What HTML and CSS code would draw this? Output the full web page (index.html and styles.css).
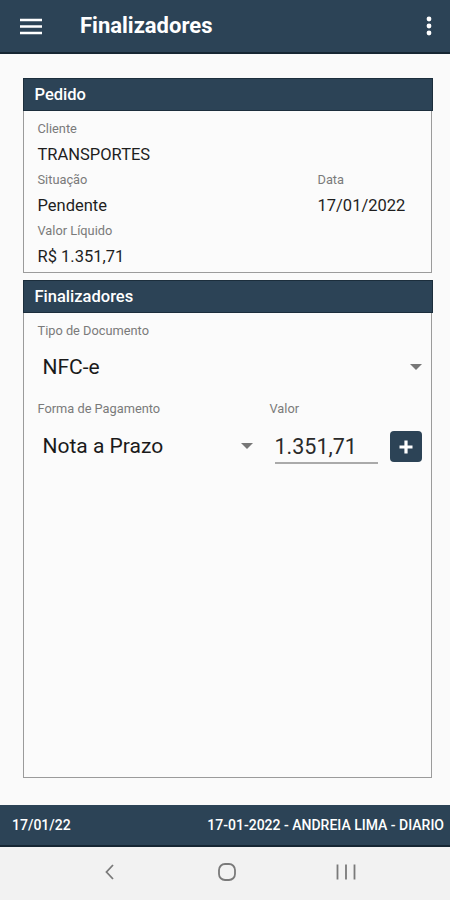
FILE: index.html
```html
<!DOCTYPE html>
<html lang="pt-BR">

<head>
    <meta charset="UTF-8" />
    <meta name="viewport" content="width=device-width, initial-scale=1.0" />
    <title>Finalizadores</title>
    <link rel="stylesheet" href="styles.css">
</head>

<body>
    <header class="appbar">
        <svg class="menu-icon" width="24" height="24" viewBox="0 0 24 24">
            <path d="M1 6h22M1 12.5h22M1 19h22" stroke="#fff" stroke-width="2.6" />
        </svg>
        <h1 class="appbar-title">Finalizadores</h1>
        <svg class="more-icon" width="8" height="24" viewBox="0 0 8 24">
            <circle cx="4" cy="5" r="2.4" fill="#fff" />
            <circle cx="4" cy="12" r="2.4" fill="#fff" />
            <circle cx="4" cy="19" r="2.4" fill="#fff" />
        </svg>
    </header>

    <main class="content">
        <section class="card">
            <div class="card-header">Pedido</div>
            <div class="card-body info">
                <div class="field">
                    <span class="label">Cliente</span>
                    <span class="value">TRANSPORTES</span>
                </div>
                <div class="field-row">
                    <div class="field">
                        <span class="label">Situação</span>
                        <span class="value">Pendente</span>
                    </div>
                    <div class="field">
                        <span class="label">Data</span>
                        <span class="value">17/01/2022</span>
                    </div>
                </div>
                <div class="field">
                    <span class="label">Valor Líquido</span>
                    <span class="value">R$ 1.351,71</span>
                </div>
            </div>
        </section>

        <section class="card card-grow">
            <div class="card-header">Finalizadores</div>
            <div class="card-body form">
                <span class="label">Tipo de Documento</span>
                <div class="spinner spinner-doc">
                    <span>NFC-e</span>
                    <span class="arrow"></span>
                </div>

                <div class="pay-labels">
                    <span class="label pay-col">Forma de Pagamento</span>
                    <span class="label">Valor</span>
                </div>
                <div class="pay-row">
                    <div class="spinner pay-col">
                        <span>Nota a Prazo</span>
                        <span class="arrow"></span>
                    </div>
                    <div class="amount">1.351,71</div>
                    <button type="button" class="add-btn">
                        <svg width="16" height="16" viewBox="0 0 16 16">
                            <path d="M8 1.5v13M1.5 8h13" stroke="#fff" stroke-width="3.2" />
                        </svg>
                    </button>
                </div>
            </div>
        </section>
    </main>

    <footer class="statusbar">
        <span>17/01/22</span>
        <span>17-01-2022 - ANDREIA LIMA - DIARIO</span>
    </footer>

    <nav class="navbar">
        <svg width="14" height="18" viewBox="0 0 14 18">
            <path d="M10 2L3.5 9l6.5 7" fill="none" stroke="#7a7a7a" stroke-width="1.8" />
        </svg>
        <svg width="20" height="20" viewBox="0 0 20 20">
            <rect x="2" y="2" width="16" height="16" rx="6" fill="none" stroke="#7a7a7a" stroke-width="1.8" />
        </svg>
        <svg width="20" height="18" viewBox="0 0 20 18">
            <path d="M1.5 1.5v15M10 1.5v15M18.5 1.5v15" stroke="#7a7a7a" stroke-width="1.8" />
        </svg>
    </nav>
</body>

</html>
```

FILE: styles.css
```css
* {
  box-sizing: border-box;
}

body {
  margin: 0;
  height: 900px;
  display: flex;
  flex-direction: column;
  font-family: Roboto, 'Noto Sans', sans-serif;
  background-color: #fafafa;
  color: #222;
}

.appbar {
  height: 54px;
  flex-shrink: 0;
  display: flex;
  align-items: center;
  padding: 0 17px 0 20px;
  background-color: #2c4356;
  border-bottom: 2px solid #162633;
}

.menu-icon {
  margin-left: -1px;
}

.appbar-title {
  flex: 1;
  margin: 0 0 2px 37px;
  font-size: 22px;
  font-weight: 700;
  color: #fff;
}

.content {
  flex: 1;
  display: flex;
  flex-direction: column;
  gap: 8px;
  padding: 24px 18px 27px 23px;
}

.card {
  border: 1.5px solid #9b9b9b;
  background-color: #fbfbfb;
  display: flex;
  flex-direction: column;
}

.card-grow {
  flex: 1;
}

.card-header {
  height: 33px;
  padding-left: 11px;
  margin: -1.5px -1.5px 0;
  display: flex;
  align-items: center;
  background-color: #2c4356;
  border: 1.5px solid #1c2e3c;
  color: #fff;
  font-size: 16.5px;
  font-weight: 500;
}

.card-body {
  padding: 8px 9px 0 13.5px;
}

.label {
  display: block;
  font-size: 12.8px;
  line-height: 20px;
  color: #7a7a7a;
}

.field .value {
  display: block;
  font-size: 16.5px;
  line-height: 31px;
  color: #1e1e1e;
}

.field-row {
  display: grid;
  grid-template-columns: 280px 1fr;
}

.spinner {
  display: flex;
  align-items: center;
  justify-content: space-between;
  padding-left: 5px;
  font-size: 21px;
  color: #1a1a1a;
}

.spinner-doc {
  height: 52px;
  padding-right: 0;
}

.arrow {
  width: 0;
  height: 0;
  border-left: 6.5px solid transparent;
  border-right: 6.5px solid transparent;
  border-top: 6px solid #777;
}

.pay-labels {
  display: flex;
  gap: 8px;
  margin-top: 6px;
}

.pay-col {
  width: 224px;
}

.pay-row {
  height: 54px;
  display: flex;
  align-items: center;
  gap: 8px;
}

.pay-row .spinner {
  padding-right: 9px;
}

.amount {
  width: 103px;
  margin: 6px 0 0 5px;
  padding-bottom: 3px;
  font-size: 21.5px;
  color: #2a2a2a;
  border-bottom: 2px solid #aaa;
}

.add-btn {
  width: 32px;
  height: 31px;
  margin-left: 4px;
  margin-top: 1px;
  padding: 0;
  display: flex;
  align-items: center;
  justify-content: center;
  background-color: #2c4356;
  border: none;
  border-radius: 4px;
}

.statusbar {
  height: 42px;
  flex-shrink: 0;
  display: flex;
  align-items: center;
  justify-content: space-between;
  padding: 0 6px 0 12px;
  background-color: #2c4356;
  border-bottom: 2px solid #162633;
  color: #fff;
  font-size: 14px;
  font-weight: 500;
}

.navbar {
  height: 53px;
  flex-shrink: 0;
  display: flex;
  align-items: center;
  justify-content: space-between;
  padding: 0 94px 4px 103px;
  background-color: #f2f2f2;
}
```
